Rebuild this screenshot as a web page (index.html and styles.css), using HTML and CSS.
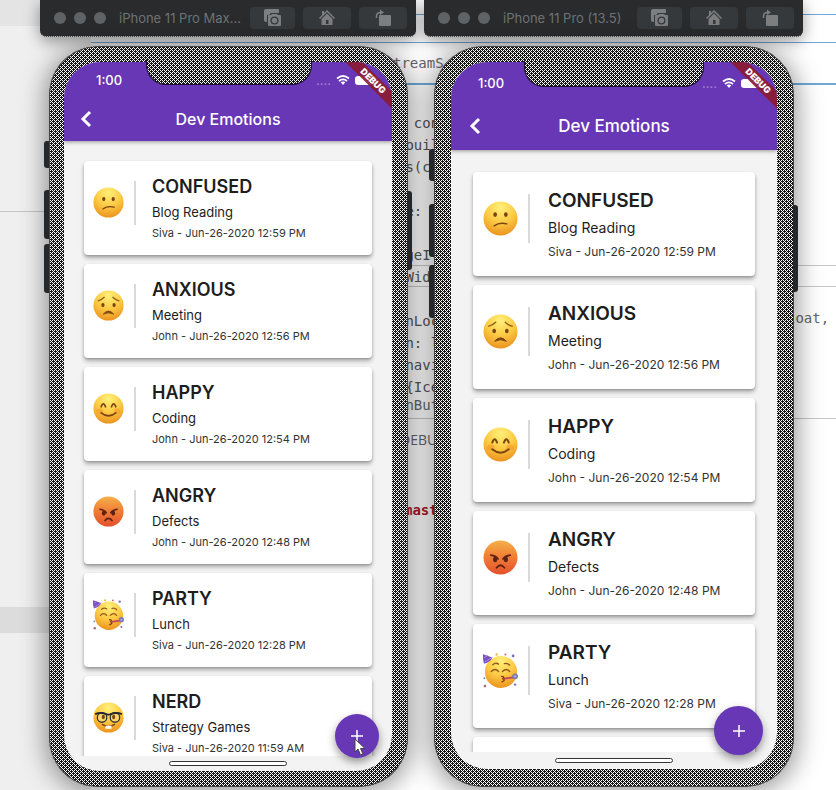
FILE: index.html
```html
<!DOCTYPE html>
<html lang="en">
<head>
<meta charset="utf-8">
<meta name="viewport" content="width=device-width, initial-scale=1">
<title>Dev Emotions</title>
<link rel="stylesheet" href="styles.css">
</head>
<body>
<svg class="defs" aria-hidden="true">
  <defs>
    <radialGradient id="skin" cx="50%" cy="18%" r="85%">
      <stop offset="0" stop-color="#fff07a"/><stop offset=".5" stop-color="#fdcb45"/><stop offset="1" stop-color="#ea8f1c"/>
    </radialGradient>
    <linearGradient id="rage" x1="0" y1="0" x2="0" y2="1">
      <stop offset="0" stop-color="#f5b04a"/><stop offset=".45" stop-color="#f08136"/><stop offset="1" stop-color="#e4502c"/>
    </linearGradient>
    <symbol id="confused" viewBox="0 0 36 36">
      <circle cx="18" cy="18" r="17.5" fill="url(#skin)"/>
      <ellipse cx="12.500" cy="14" rx="1.900" ry="2.500" fill="#7a4410"/><ellipse cx="23.500" cy="14" rx="1.900" ry="2.500" fill="#7a4410"/>
      <path d="M11.500 25.500Q17 21.500 24.500 23.500" fill="none" stroke="#7a4410" stroke-width="1.500" stroke-linecap="round"/>
    </symbol>
    <symbol id="anxious" viewBox="0 0 36 36">
      <circle cx="18" cy="18" r="17.5" fill="url(#skin)"/>
      <ellipse cx="11.500" cy="17.500" rx="1.900" ry="2.400" fill="#7a4410"/><ellipse cx="24.500" cy="17.500" rx="1.900" ry="2.400" fill="#7a4410"/>
      <path d="M6 12.500Q10 11.500 13 8.500M30 12.500Q26 11.500 23 8.500" fill="none" stroke="#96591a" stroke-width="1.500" stroke-linecap="round"/>
      <path d="M12 28Q18 21 24 28Q18 25 12 28Z" fill="#7a4410" stroke="#7a4410" stroke-linejoin="round"/>
    </symbol>
    <symbol id="happy" viewBox="0 0 36 36">
      <circle cx="18" cy="18" r="17.5" fill="url(#skin)"/>
      <ellipse cx="8" cy="21" rx="4" ry="3" fill="#f59a2c" opacity=".6"/><ellipse cx="28" cy="21" rx="4" ry="3" fill="#f59a2c" opacity=".6"/>
      <path d="M9.500 16Q12 9 14.500 16M21.500 16Q24 9 26.500 16" fill="none" stroke="#7a4410" stroke-width="2" stroke-linecap="round"/>
      <path d="M9.500 23Q18 30 26.500 23" fill="none" stroke="#7a4410" stroke-width="2" stroke-linecap="round"/>
    </symbol>
    <symbol id="angry" viewBox="0 0 36 36">
      <circle cx="18" cy="18" r="17.5" fill="url(#rage)"/>
      <ellipse cx="12.500" cy="20" rx="2.200" ry="2.800" fill="#5d2115"/><ellipse cx="23.500" cy="20" rx="2.200" ry="2.800" fill="#5d2115"/>
      <path d="M8 15.500Q13 16 15.500 19.500M28 15.500Q23 16 20.500 19.500" fill="none" stroke="#5d2115" stroke-width="1.700" stroke-linecap="round"/>
      <path d="M14 28.500Q18 23.500 22 28.500" fill="none" stroke="#5d2115" stroke-width="1.900" stroke-linecap="round"/>
    </symbol>
    <symbol id="party" viewBox="0 0 36 36">
      <circle cx="18.500" cy="19.500" r="16.500" fill="url(#skin)"/>
      <path d="M-1 1L9.500 4.500Q8 9 1 11Z" fill="#7950bd"/>
      <path d="M1 5L5 2.500M2 9L9.500 4.500" stroke="#b58ae0" stroke-width="1"/>
      <path d="M8.500 19Q12.500 15 16 19M20 19Q24 15 27.500 19M10 12Q13 9.500 16 11.500M22 11Q25 10 27.500 12.500" fill="none" stroke="#94571a" stroke-width="1.400" stroke-linecap="round"/>
      <path d="M18.500 24Q23 24 20.500 26.500Q24 28 19 30" fill="none" stroke="#7a3610" stroke-width="1.400"/>
      <path d="M21 26.500L32 25" stroke="#c1455b" stroke-width="2"/>
      <circle cx="33" cy="24" r="3" fill="#7778b5"/><circle cx="33" cy="24" r="1.200" fill="#b6aedb"/>
      <circle cx="14" cy="1.500" r="1.200" fill="#edbd43"/><circle cx="31" cy="3" r="1.400" fill="#8068b8"/><circle cx="23" cy="1.500" r="1" fill="#d45668"/>
      <circle cx="1.500" cy="26" r="1" fill="#7788b8"/><circle cx="2" cy="34" r="1.400" fill="#a36c80"/><circle cx="33" cy="32.500" r="1.200" fill="#8068b8"/>
    </symbol>
    <symbol id="nerd" viewBox="0 0 36 36">
      <circle cx="18" cy="18" r="17.5" fill="url(#skin)"/>
      <circle cx="10.500" cy="18" r="5.500" fill="#ffd769" stroke="#30343a" stroke-width="1.500"/><circle cx="25.500" cy="18" r="5.500" fill="#ffd769" stroke="#30343a" stroke-width="1.500"/>
      <path d="M2.500 14Q9 11.500 15.500 14Q18 15.500 20.500 14Q27 11.500 33.500 14" fill="none" stroke="#25282d" stroke-width="2.200"/>
      <ellipse cx="12" cy="17.500" rx="1.800" ry="2.600" fill="#7a4410"/><ellipse cx="24" cy="17.500" rx="1.800" ry="2.600" fill="#7a4410"/>
      <path d="M11 26Q18 31 25 26" fill="none" stroke="#7a4410" stroke-width="1.600" stroke-linecap="round"/>
      <path d="M14.500 27.500H21.500V31H14.500Z" fill="#fff"/>
    </symbol>
    <symbol id="camera" viewBox="0 0 20 18">
      <path d="M3 0H15Q16 0 16 1V4H8L6 6H4V13H3Q1 13 1 11V2Q1 0 3 0Z"/>
      <path fill-rule="evenodd" d="M6 6H8L9 5H14L15 6H17Q18 6 18 7V16Q18 17 17 17H6Q5 17 5 16V7Q5 6 6 6ZM11.500 7.500A4 4 0 1 0 11.500 15.500A4 4 0 1 0 11.500 7.500M11.500 8.800A2.700 2.700 0 1 1 11.500 14.200A2.700 2.700 0 1 1 11.500 8.800"/>
    </symbol>
    <symbol id="home" viewBox="0 0 20 18">
      <path d="M10 1L18 9L17 10L10 3L3 10L2 9L5 6V2H7V4Z"/>
      <path fill-rule="evenodd" d="M10 4.500L15.500 10V16H4.500V10ZM9 11V15H11.500V11Z"/>
    </symbol>
    <symbol id="rotate" viewBox="0 0 20 18">
      <path d="M7 6H17Q18 6 18 7V16Q18 17 17 17H7Q6 17 6 16V7Q6 6 7 6Z"/>
      <path d="M3.500 9V7Q3.500 3.500 8 3.500" fill="none" stroke="currentColor" stroke-width="1.500"/><path d="M7 0.500L11 3.500L7 6Z"/>
    </symbol>
    <symbol id="wifi" viewBox="0 0 14 10">
      <path d="M1 3.500Q7 -1.500 13 3.500M3 6Q7 2.700 11 6" fill="none" stroke="currentColor" stroke-width="1.700"/><path d="M4.700 7.300Q7 5.700 9.300 7.300L7 10Z"/>
    </symbol>
  </defs>
</svg>

<div class="backdrop" aria-hidden="true">
  <div class="side-panel"></div>
  <div class="rule rule-a"></div><div class="rule rule-b"></div><div class="rule rule-c"></div>
  <div class="rule rule-d"></div><div class="rule rule-e"></div><div class="rule rule-f"></div>
  <span class="panel-text stream">treamS</span>
  <pre class="code">  con
 ouil
 s(c

 e:

 geI.
 Wid

 nLoc
 n: l
 navi
 {Ice</pre>
  <span class="panel-text hint">onBut</span>
  <span class="panel-text tag">DEBU</span>
  <span class="panel-text branch">mast</span>
  <span class="panel-text float">loat,</span>
</div>

<main class="desktop">
  <section class="simulator max">
    <header class="titlebar">
      <i class="dot"></i><i class="dot"></i><i class="dot"></i>
      <h1 class="device">iPhone 11 Pro Max…</h1>
      <button class="tool" aria-label="Screenshot"><svg><use href="#camera"/></svg></button>
      <button class="tool" aria-label="Home"><svg><use href="#home"/></svg></button>
      <button class="tool" aria-label="Rotate"><svg><use href="#rotate"/></svg></button>
    </header>
    <div class="phone">
      <i class="key mute"></i><i class="key up"></i><i class="key down"></i><i class="key power"></i>
      <div class="screen">
        <div class="appbar">
          <div class="status"><time>1:00</time><span class="signal">....</span><svg class="wifi"><use href="#wifi"/></svg><i class="battery"></i></div>
          <div class="toolbar"><button class="back" aria-label="Back"><svg viewBox="0 0 12 18"><path d="M10 2L3 9L10 16"/></svg></button><h2>Dev Emotions</h2></div>
        </div>
        <ul class="list">
          <li class="card"><svg class="face"><use href="#confused"/></svg><div class="entry"><h3>CONFUSED</h3><p>Blog Reading</p><small>Siva - Jun-26-2020 12:59 PM</small></div></li>
          <li class="card"><svg class="face"><use href="#anxious"/></svg><div class="entry"><h3>ANXIOUS</h3><p>Meeting</p><small>John - Jun-26-2020 12:56 PM</small></div></li>
          <li class="card"><svg class="face"><use href="#happy"/></svg><div class="entry"><h3>HAPPY</h3><p>Coding</p><small>John - Jun-26-2020 12:54 PM</small></div></li>
          <li class="card"><svg class="face"><use href="#angry"/></svg><div class="entry"><h3>ANGRY</h3><p>Defects</p><small>John - Jun-26-2020 12:48 PM</small></div></li>
          <li class="card"><svg class="face"><use href="#party"/></svg><div class="entry"><h3>PARTY</h3><p>Lunch</p><small>Siva - Jun-26-2020 12:28 PM</small></div></li>
          <li class="card"><svg class="face"><use href="#nerd"/></svg><div class="entry"><h3>NERD</h3><p>Strategy Games</p><small>Siva - Jun-26-2020 11:59 AM</small></div></li>
        </ul>
        <div class="home-area"><i class="indicator"></i></div>
        <span class="banner">DEBUG</span>
        <button class="fab" aria-label="Add emotion"><svg viewBox="0 0 14 14"><path d="M7 1V13M1 7H13"/></svg></button>
        <svg class="cursor" viewBox="0 0 12 18"><path d="M1 1V14L4 11L6.500 17L9 16L6.500 10.500H11Z"/></svg>
      </div>
      <i class="notch"></i>
    </div>
  </section>

  <section class="simulator pro">
    <header class="titlebar">
      <i class="dot"></i><i class="dot"></i><i class="dot"></i>
      <h1 class="device">iPhone 11 Pro (13.5)</h1>
      <button class="tool" aria-label="Screenshot"><svg><use href="#camera"/></svg></button>
      <button class="tool" aria-label="Home"><svg><use href="#home"/></svg></button>
      <button class="tool" aria-label="Rotate"><svg><use href="#rotate"/></svg></button>
    </header>
    <div class="phone">
      <i class="key mute"></i><i class="key up"></i><i class="key down"></i><i class="key power"></i>
      <div class="screen">
        <div class="appbar">
          <div class="status"><time>1:00</time><span class="signal">....</span><svg class="wifi"><use href="#wifi"/></svg><i class="battery"></i></div>
          <div class="toolbar"><button class="back" aria-label="Back"><svg viewBox="0 0 12 18"><path d="M10 2L3 9L10 16"/></svg></button><h2>Dev Emotions</h2></div>
        </div>
        <ul class="list">
          <li class="card"><svg class="face"><use href="#confused"/></svg><div class="entry"><h3>CONFUSED</h3><p>Blog Reading</p><small>Siva - Jun-26-2020 12:59 PM</small></div></li>
          <li class="card"><svg class="face"><use href="#anxious"/></svg><div class="entry"><h3>ANXIOUS</h3><p>Meeting</p><small>John - Jun-26-2020 12:56 PM</small></div></li>
          <li class="card"><svg class="face"><use href="#happy"/></svg><div class="entry"><h3>HAPPY</h3><p>Coding</p><small>John - Jun-26-2020 12:54 PM</small></div></li>
          <li class="card"><svg class="face"><use href="#angry"/></svg><div class="entry"><h3>ANGRY</h3><p>Defects</p><small>John - Jun-26-2020 12:48 PM</small></div></li>
          <li class="card"><svg class="face"><use href="#party"/></svg><div class="entry"><h3>PARTY</h3><p>Lunch</p><small>Siva - Jun-26-2020 12:28 PM</small></div></li>
          <li class="card"></li>
        </ul>
        <div class="home-area"><i class="indicator"></i></div>
        <span class="banner">DEBUG</span>
        <button class="fab" aria-label="Add emotion"><svg viewBox="0 0 14 14"><path d="M7 1V13M1 7H13"/></svg></button>
      </div>
      <i class="notch"></i>
    </div>
  </section>
</main>
</body>
</html>
```
FILE: styles.css
```css
* { box-sizing: border-box; }
body { margin: 0; background: #fff; font-family: Inter, "Liberation Sans", sans-serif; color: #1d1d1d; }
h1, h2, h3, p, ul { margin: 0; padding: 0; }
button { border: 0; padding: 0; font: inherit; }
.defs { position: absolute; width: 0; height: 0; }

/* Editor window behind the simulators */
.backdrop { position: absolute; inset: 0; overflow: hidden; }
.side-panel {
  position: absolute; inset: 0 auto 0 0; width: 91px;
  background: linear-gradient(#e4e4e4 26px, #efefef 26px, #efefef 211px, #c4c4c4 211px, #c4c4c4 212px, #efefef 212px, #efefef 607px, #dcdcdc 607px, #dcdcdc 633px, #efefef 633px);
}
.rule { position: absolute; left: 91px; right: 0; height: 1px; background: #c8c8c8; }
.rule-a { top: 14px; left: 400px; background: #70a8d8; }
.rule-b { top: 42px; background: #70a8d8; }
.rule-c { top: 83px; height: 2px; left: 400px; background: #70a8d8; }
.rule-d { top: 265px; left: 400px; }
.rule-e { top: 286px; left: 400px; }
.rule-f { top: 418px; left: 400px; }
.code { position: absolute; top: 112px; left: 397px; margin: 0; font: 14px/22px "DejaVu Sans Mono", monospace; color: #555; }
.panel-text { position: absolute; left: 397px; font: 14px/20px "DejaVu Sans Mono", monospace; color: #666; }
.stream { top: 53px; left: 393px; }
.hint { top: 395px; }
.tag { top: 430px; left: 400px; font-family: "Open Sans", sans-serif; }
.branch { top: 500px; left: 404px; font-weight: 700; color: #b01822; }
.float { top: 308px; left: 787px; }

.desktop {
  position: relative; display: grid; grid-template-columns: 376fr 379fr; gap: 8px;
  height: 100vh; min-height: 480px; padding: 0 33px 3px 40px; overflow: hidden;
}
.simulator { display: flex; flex-direction: column; gap: 9px; min-width: 0; min-height: 0; }
.max {
  --bezel: 16px 16px 16px 15px; --phone-margin: 0 8px 0 9px; --appbar: 79px; --status: 36px; --toolbar: 42px; --list-pad: 20px; --gap: 9px;
  --card: 94px; --card-top: 16px; --face: 31px; --face-left: 9px; --face-top: 26px; --rule-left: 10px; --rule-top: 4px; --rule: 44px;
  --h: 18px; --p: 13px; --s: 11px; --h-line: 20px; --p-line: 18px; --s-line: 14px; --bar: 16px; --inset: 18px;
  --area: 15px; --fab: 44px; --fab-right: 13px; --fab-bottom: 13px; --notch: 166px; --notch-h: 25px;
  --mute: 95px; --mute-h: 27px; --up: 144px; --up-h: 49px; --down: 198px; --power: 145px; --power-h: 79px; --time: 13px;
}
.pro {
  --bezel: 16px 17px 18px; --phone-margin: 0 9px 0 10px; --appbar: 88px; --status: 42px; --toolbar: 44px; --list-pad: 22px; --gap: 9px;
  --card: 104px; --card-top: 18px; --face: 35px; --face-left: 10px; --face-top: 29px; --rule-left: 10px; --rule-top: 4px; --rule: 49px;
  --h: 19px; --p: 14px; --s: 12px; --h-line: 22px; --p-line: 20px; --s-line: 18px; --bar: 17px; --inset: 20px;
  --area: 17px; --fab: 49px; --fab-right: 14px; --fab-bottom: 14px; --notch: 180px; --notch-h: 27px;
  --mute: 103px; --mute-h: 32px; --up: 158px; --up-h: 53px; --down: 219px; --power: 159px; --power-h: 87px; --time: 13px;
}

.titlebar {
  display: flex; align-items: center; gap: 8px; height: 37px; padding: 0 9px 0 14px; flex: none;
  background: #292b2d; border-bottom: 1px dotted #ddd; border-radius: 0 0 6px 6px; box-shadow: 0 4px 16px rgba(0, 0, 0, .4);
}
.dot { width: 12px; height: 12px; border-radius: 50%; background: #5f6365; flex: none; }
.device { flex: 1; margin-left: 5px; min-width: 0; font-size: 13px; line-height: 20px; font-weight: 400; color: #707274; white-space: nowrap; }
.tool { display: grid; place-items: center; width: 48px; height: 22px; border-radius: 4px; background: #36393c; color: #7c7e80; flex: none; }
.tool:nth-of-type(1) { width: 45px; }
.tool svg { width: 20px; height: 18px; fill: currentColor; }

/* Stippled casing shared by the bezel and the notch */
.phone, .notch {
  background:
    conic-gradient(from 270deg at 1px 1px, #fff 25%, transparent 0) 0 1px / 4px 4px,
    conic-gradient(from 270deg at 1px 1px, #fff 25%, transparent 0) 2px 3px / 4px 4px,
    conic-gradient(#fff 25%, transparent 0) 0 0 / 2px 2px,
    #161616;
}
.phone {
  position: relative; flex: 1; min-height: 0; margin: var(--phone-margin); padding: var(--bezel); border-radius: 49px;
  box-shadow: inset 0 0 0 1px #444, 0 3px 26px 3px rgba(0, 0, 0, .42);
}
.key { position: absolute; left: -5px; width: 5px; border-radius: 3px 0 0 3px; background: #25282a; }
.mute { top: var(--mute); height: var(--mute-h); }
.up { top: var(--up); height: var(--up-h); }
.down { top: var(--down); height: var(--up-h); }
.power { left: auto; right: -4px; top: var(--power); height: var(--power-h); border-radius: 0 3px 3px 0; }
.notch {
  position: absolute; z-index: 3; top: 14px; left: 50%; width: var(--notch); height: var(--notch-h); transform: translateX(-50%);
  border: 1px solid #1c1230; border-top: 0; border-radius: 0 0 20px 20px;
}

.screen { position: relative; display: flex; flex-direction: column; height: 100%; overflow: hidden; border-radius: 36px; background: #f3f3f3; }
.appbar { position: relative; z-index: 1; flex: none; height: var(--appbar); background: #6737b5; color: #fff; box-shadow: 0 1px 4px rgba(0, 0, 0, .4); }
.status { display: flex; align-items: center; height: var(--status); padding: 0 15px 0 32px; }
.pro .status { padding: 0 14px 0 27px; }
.status time { flex: 1; font-size: var(--time); font-weight: 500; }
.signal { font-size: 13px; color: #a084d3; margin-right: 5px; }
.wifi { width: 14px; height: 10px; fill: currentColor; margin-right: 5px; }
.battery { width: 22px; height: 9px; border-radius: 3px; background: #fff; }
.toolbar { display: flex; align-items: center; position: relative; height: var(--toolbar); }
.toolbar h2 { flex: 1; text-align: center; font-size: var(--bar); font-weight: 500; line-height: 24px; padding-right: 32px; }
.back { width: 32px; height: 32px; padding-left: 16px; background: none; color: #fff; }
.pro .back { padding-left: 18px; }
.back svg { display: block; width: 12px; height: 18px; fill: none; stroke: currentColor; stroke-width: 3px; }

.list { display: flex; flex-direction: column; gap: var(--gap); flex: 1; min-height: 0; overflow: hidden; list-style: none; padding: var(--list-pad) var(--list-pad) 0; }
.card {
  display: flex; align-items: flex-start; flex: none; height: var(--card); padding: var(--card-top) 0 0 var(--face-left);
  background: #fff; border-radius: 4px; box-shadow: 0 3px 4px rgba(0, 0, 0, .3), 0 1px 2px rgba(0, 0, 0, .15);
}
.face { flex: none; width: var(--face); height: var(--face); margin-top: calc(var(--face-top) - var(--card-top)); overflow: visible; }
.entry { position: relative; margin-left: calc(var(--rule-left) + var(--inset)); }
.entry::before { content: ""; position: absolute; left: calc(0px - var(--inset)); top: var(--rule-top); width: 2px; height: var(--rule); background: #dadada; }
.entry h3 { font-size: var(--h); line-height: var(--h-line); font-weight: 600; }
.entry p { margin-top: 6px; font-size: var(--p); line-height: var(--p-line); }
.entry small { display: block; margin-top: 5px; font-size: var(--s); line-height: var(--s-line); color: #333; white-space: nowrap; }

.home-area { display: grid; place-items: center; flex: none; height: var(--area); }
.indicator { width: 118px; height: 5px; border: 1px solid #333; border-radius: 3px; background: #fff; }
.banner {
  position: absolute; z-index: 2; top: 13px; right: -21px; width: 80px; transform: rotate(45deg);
  background: rgba(139, 28, 50, .92); color: #fff; font-size: 9px; line-height: 12px; font-weight: 900; text-align: center;
}
.fab {
  position: absolute; right: var(--fab-right); bottom: var(--fab-bottom); display: grid; place-items: center;
  width: var(--fab); height: var(--fab); border-radius: 50%; background: #6737b5; box-shadow: 0 4px 8px rgba(0, 0, 0, .4);
}
.fab svg { width: 14px; height: 14px; stroke: #fff; stroke-width: 1.5px; }
.cursor { position: absolute; right: 26px; bottom: 15px; width: 12px; height: 18px; fill: #fff; stroke: #444; stroke-width: 1px; }
```
